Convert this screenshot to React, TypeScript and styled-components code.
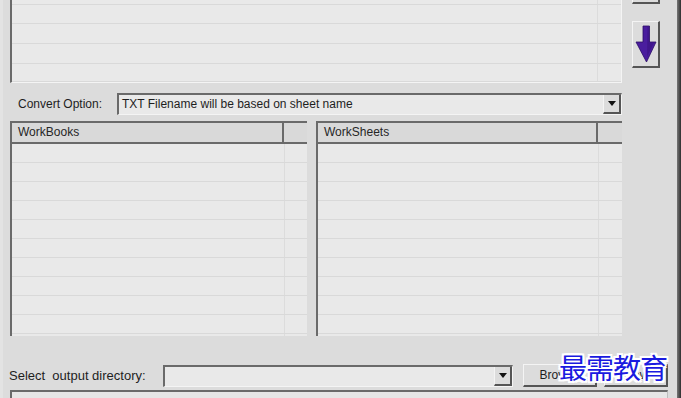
import React from "react";
import styled, { createGlobalStyle } from "styled-components";

const GlobalStyle = createGlobalStyle`
  html, body {
    margin: 0;
    padding: 0;
    background: #dcdcdc;
  }

  body {
    font-family: "Liberation Sans", Arial, sans-serif;
    font-size: 12px;
    color: #1e1e1e;
  }

  * {
    box-sizing: border-box;
  }
`;

const DARK = "#6a6a6a";
const SHADOW = "#555";
const LIGHT = "#f4f4f4";

const Window = styled.div`
  position: relative;
  width: 681px;
  height: 398px;
  overflow: hidden;
  display: flex;
  background: #dcdcdc;
`;

const Main = styled.div`
  flex: 1;
  display: flex;
  flex-direction: column;
  border-left: 3px solid #e3e3e3;
`;

const Edge = styled.div`
  width: 4px;
  background: linear-gradient(to right, #777, #2e2e2e);
`;

const TopSection = styled.div`
  display: flex;
  align-items: flex-start;
  gap: 10px;
  padding-left: 7px;
`;

const LeftColumn = styled.div`
  width: 612px;
  display: flex;
  flex-direction: column;
`;

const TopTable = styled.div`
  height: 83px;
  display: flex;
  flex-direction: column;
  background: #e9e9e9;
  border-left: 2px solid ${DARK};
  border-right: 1px solid ${LIGHT};
  border-bottom: 1px solid ${LIGHT};
  overflow: hidden;
`;

const Row = styled.div<{ $cols: string; $h: number }>`
  display: grid;
  grid-template-columns: ${(p) => p.$cols};
  height: ${(p) => p.$h}px;
  flex-shrink: 0;
  border-bottom: 1px solid #d9d9d9;
`;

const Cell = styled.div`
  border-right: 1px solid #dcdcdc;

  &:last-child {
    border-right: none;
  }
`;

const ConvertRow = styled.div`
  display: flex;
  align-items: center;
  margin-top: 10px;
  height: 22px;
`;

const Label = styled.div<{ $w: number; $pad: number; $size?: number }>`
  width: ${(p) => p.$w}px;
  padding-left: ${(p) => p.$pad}px;
  font-size: ${(p) => p.$size ?? 12}px;
  white-space: pre;
  flex-shrink: 0;
`;

const Combo = styled.div<{ $w?: number }>`
  display: flex;
  height: 22px;
  ${(p) => (p.$w ? `width: ${p.$w}px;` : "flex: 1;")}
  flex-shrink: 0;
  background: #e9e9e9;
  border-top: 2px solid ${DARK};
  border-left: 2px solid ${DARK};
  border-bottom: 1px solid ${LIGHT};
  border-right: 1px solid ${LIGHT};
`;

const ComboText = styled.div`
  flex: 1;
  padding-left: 3px;
  line-height: 19px;
  white-space: nowrap;
  overflow: hidden;
`;

const DropButton = styled.div`
  width: 18px;
  display: flex;
  align-items: center;
  justify-content: center;
  background: #dcdcdc;
  border-left: 1px solid ${LIGHT};
  border-right: 2px solid ${SHADOW};
  border-bottom: 2px solid ${SHADOW};

  &::after {
    content: "";
    border-left: 4px solid transparent;
    border-right: 4px solid transparent;
    border-top: 5px solid #111;
  }
`;

const TablesRow = styled.div`
  display: flex;
  gap: 9px;
  margin-top: 6px;
  height: 215px;
`;

const ListTable = styled.div<{ $w?: number }>`
  ${(p) => (p.$w ? `width: ${p.$w}px;` : "flex: 1;")}
  display: flex;
  flex-direction: column;
  background: #e9e9e9;
  border-top: 2px solid ${DARK};
  border-left: 2px solid ${DARK};
  overflow: hidden;
`;

const Header = styled.div<{ $cols: string }>`
  display: grid;
  grid-template-columns: ${(p) => p.$cols};
  height: 21px;
  flex-shrink: 0;
  background: #d9d9d9;
  border-bottom: 2px solid ${DARK};
`;

const HeaderCell = styled.div`
  padding-left: 6px;
  line-height: 19px;
  color: #262626;
  border-right: 2px solid ${DARK};

  &:last-child {
    border-right: none;
  }
`;

const ButtonColumn = styled.div`
  width: 28px;
  display: flex;
  flex-direction: column;
  gap: 17px;
`;

const SideStub = styled.div`
  height: 4px;
  background: #dcdcdc;
  border-left: 1px solid ${LIGHT};
  border-right: 2px solid ${SHADOW};
  border-bottom: 2px solid ${SHADOW};
`;

const SideButton = styled.div`
  height: 47px;
  display: flex;
  align-items: center;
  justify-content: center;
  background: #dcdcdc;
  border-top: 1px solid ${LIGHT};
  border-left: 1px solid ${LIGHT};
  border-right: 2px solid ${SHADOW};
  border-bottom: 2px solid ${SHADOW};
`;

const BottomRow = styled.div`
  display: flex;
  align-items: center;
  margin-top: 28px;
  height: 23px;
`;

const PushButton = styled.div<{ $w: number; $gap: number }>`
  width: ${(p) => p.$w}px;
  margin-left: ${(p) => p.$gap}px;
  height: 23px;
  display: flex;
  align-items: center;
  justify-content: center;
  background: #dcdcdc;
  border-top: 1px solid ${LIGHT};
  border-left: 1px solid ${LIGHT};
  border-right: 2px solid ${SHADOW};
  border-bottom: 2px solid ${SHADOW};
  color: #1e1e1e;
`;

const BottomPanel = styled.div`
  margin-top: 3px;
  margin-left: 7px;
  width: 658px;
  flex: 1;
  background: #e6e6e6;
  border-top: 2px solid ${DARK};
  border-left: 2px solid ${DARK};
  border-right: 1px solid #bdbdbd;
`;

const Watermark = styled.div`
  position: absolute;
  left: 559px;
  top: 353px;
  font-family: "Noto Sans CJK SC", sans-serif;
  font-size: 28px;
  letter-spacing: -1px;
  line-height: 1;
  color: #1a1ae0;
  text-shadow:
    2px 0 0 #fff, -2px 0 0 #fff, 0 2px 0 #fff, 0 -2px 0 #fff,
    1px 1px 0 #fff, -1px -1px 0 #fff, 1px -1px 0 #fff, -1px 1px 0 #fff,
    2px 2px 0 #fff, -2px -2px 0 #fff, 2px -2px 0 #fff, -2px 2px 0 #fff;
`;

const topRowHeights = [5, 19, 20, 20, 18];

const ArrowDown: React.FC = () => (
  <svg width="24" height="40" viewBox="0 0 24 40">
    <path
      d="M9 2 H15.5 V18 H22 L12.5 38 L2 18 H9 Z"
      fill="#4a1d9e"
      stroke="#2b0e66"
      strokeWidth="0.8"
      strokeLinejoin="round"
    />
    <path d="M13.5 3 H15 V18.5 H20 L13 33 Z" fill="#3a1280" opacity="0.6" />
  </svg>
);

const List: React.FC<{ title: string; width?: number; headW: number }> = ({
  title,
  width,
  headW,
}) => {
  const cols = `${headW}px 1fr`;
  return (
    <ListTable $w={width}>
      <Header $cols={cols}>
        <HeaderCell>{title}</HeaderCell>
        <HeaderCell />
      </Header>
      {Array.from({ length: 11 }).map((_, i) => (
        <Row key={i} $cols={`${headW + 1}px 1fr`} $h={19}>
          <Cell />
          <Cell />
        </Row>
      ))}
    </ListTable>
  );
};

const App: React.FC = () => {
  return (
    <>
      <GlobalStyle />
      <Window>
        <Main>
          <TopSection>
            <LeftColumn>
              <TopTable>
                {topRowHeights.map((h, i) => (
                  <Row key={i} $cols="586px 1fr" $h={h}>
                    <Cell />
                    <Cell />
                  </Row>
                ))}
              </TopTable>

              <ConvertRow>
                <Label $w={107} $pad={8}>
                  Convert Option:
                </Label>
                <Combo>
                  <ComboText>TXT Filename will be based on sheet name</ComboText>
                  <DropButton />
                </Combo>
              </ConvertRow>

              <TablesRow>
                <List title="WorkBooks" width={297} headW={272} />
                <List title="WorkSheets" headW={280} />
              </TablesRow>
            </LeftColumn>

            <ButtonColumn>
              <SideStub />
              <SideButton>
                <ArrowDown />
              </SideButton>
            </ButtonColumn>
          </TopSection>

          <BottomRow>
            <Label $w={160} $pad={6} $size={13}>
              {"Select  output directory:"}
            </Label>
            <Combo $w={350}>
              <ComboText />
              <DropButton />
            </Combo>
            <PushButton $w={74} $gap={10}>
              Browse
            </PushButton>
            <PushButton $w={64} $gap={7}>
              View
            </PushButton>
          </BottomRow>

          <BottomPanel />
        </Main>
        <Edge />
        <Watermark>最需教育</Watermark>
      </Window>
    </>
  );
};

export default App;
